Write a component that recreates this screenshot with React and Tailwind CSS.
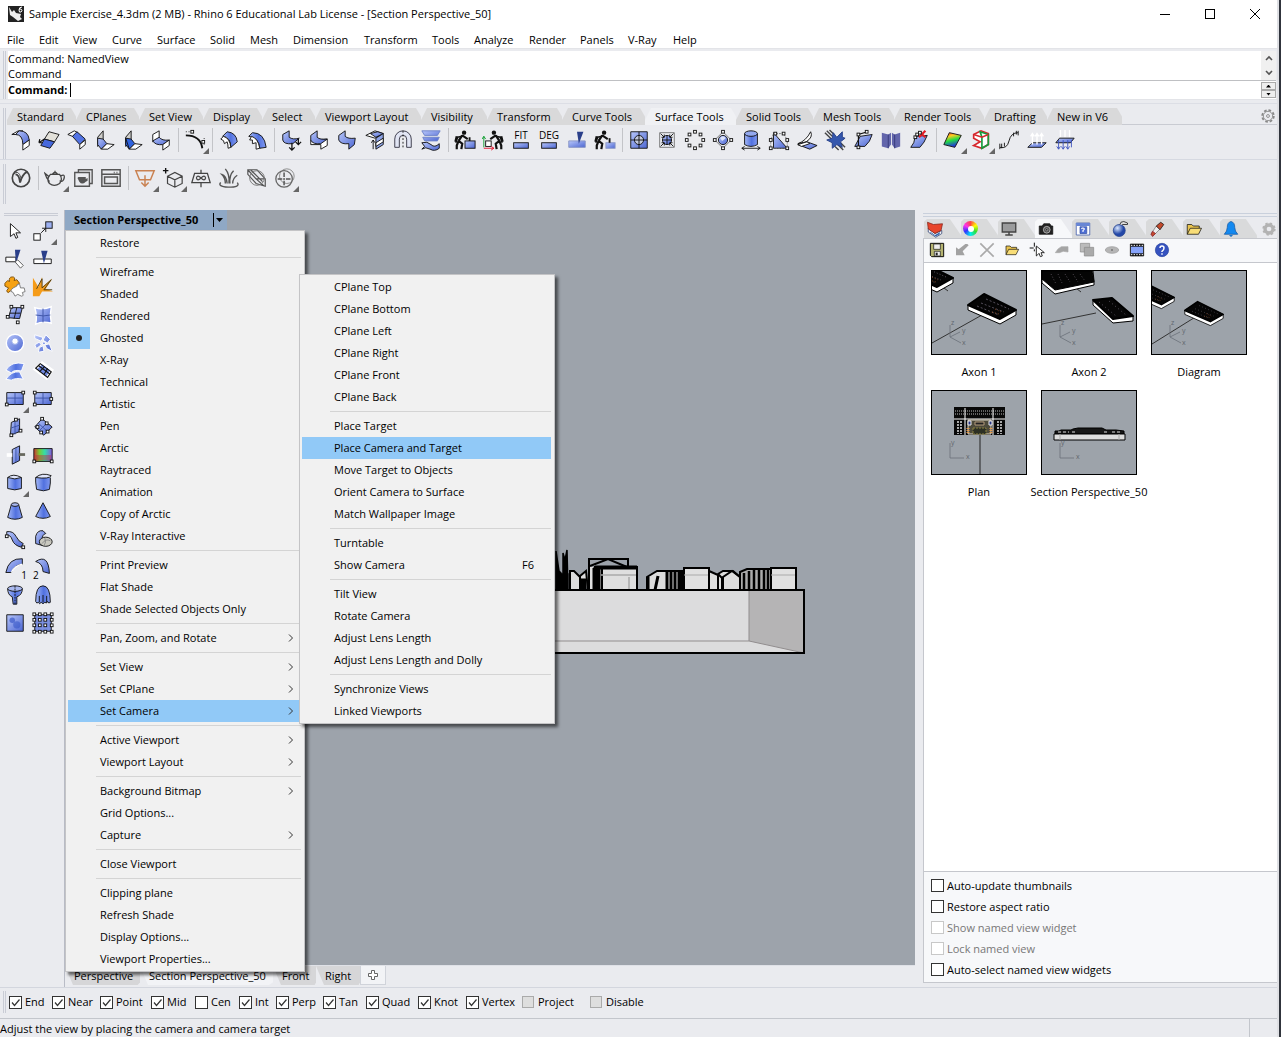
import React, { useState } from 'react';

const B = ({ d }) => <path d={d} fill="url(#blue)" />;
const W = ({ d }) => <path d={d} fill="#fff" />;
const L = ({ d, c, w, dash }) => <path d={d} stroke={c} strokeWidth={w} strokeDasharray={dash} />;
const F = ({ d, c }) => <path d={d} fill={c} stroke="none" />;
// small square control point handles
const P = ({ at }) => at.map(([x, y]) => <rect key={`${x}-${y}`} x={x - 1.5} y={y - 1.5} width="3" height="3" fill="#fff" />);

const walker = (
  <>
    <circle cx="11" cy="4" r="2.4" fill="#111" stroke="none" />
    <L d="M9 7L5 13M9 7l6 4M5 13l4 3-1 6M5 13l-2 5v4M3 8L1.500 14" w="2.4" />
    <L d="M9 8L4 9 2 15" w="1.6" />
  </>
);

const icons = {
  // surface tools
  extrudeFillet: <><W d="M2 6l7-4 5 0L8 6z" /><B d="M10 2q10 0 11 10l-7 5Q14 6 6 6z" /><W d="M14 17l7-5v6l-7 5z" /></>,
  extrudeFace: <><path d="M12 3l11 3-5 8-11-3z" fill="#e3e1da" /><path d="M7 11l11 3-5 7-10-3z" fill="#4668dd" /><L d="M7 11l-6 4M1 15l1-4M1 15h4" w="1.300" /></>,
  chamfer: <><W d="M2 6l7-4 4 2-6 4z" /><path d="M12 3l9 8-6 6-8-9z" fill="#5273e4" /><W d="M15 17l6-5v5l-6 5z" /></>,
  blendA: <><path d="M4 9l6-7v10l-6 7z" fill="#cdccc8" /><B d="M4 10l6 1 4 5-6 6-4-5z" /><W d="M8 22l6-6 8 1-7 5z" /></>,
  blendB: <><path d="M4 9l6-7v10l-6 7z" fill="#cdccc8" /><path d="M4 10l6 1 4 5-6 6-4-5z" fill="#2f62dd" /><W d="M8 22l6-6 8 1-7 5z" /><L d="M4 10l4 12" /></>,
  matchStep: <><W d="M3 6l7-4v8l-7 4z" /><B d="M3 13l7-4q3 4 11 3l-7 5q-8 1-11-4z" /><W d="M14 17l7-5v6l-7 5z" /></>,
  curveHandles: <><L d="M2 7q16 0 18 14" w="2" /><L d="M2 3h9M22 10v9" dash="1 2" /><P at={[[9, 3], [21, 14]]} /></>,
  offset: <><path d="M10 3q10 1 11 11l-7 6Q14 9 5 8z" fill="url(#deep)" /><W d="M6 8l-3 3q4 1 4 5l3-2q1 3 1 7l3-1Q13 10 6 8z" /></>,
  offsetVar: <><path d="M7 4q13 0 15 16l-7 1Q14 9 3 8z" fill="url(#deep)" /><W d="M6 8l-2 4h3v4l4-1v7l4-1Q13 10 6 8z" /></>,
  stepDown: <><B d="M3 6l7-4v7q4 3 11 1l-7 6q-10 1-11-4z" /><L d="M13 15v8M10 20l3 3 3-3M20 11v6M17 14l3 3 3-3" w="1.4" /></>,
  stepFill: <><W d="M3 12v5h11v5l7-4v-7z" /><B d="M3 7l7-5v7q3 3 11 2l-7 5q-9 1-11-4z" /></>,
  stepBlue: <><B d="M3 7l7-5v6q3 3 11 2l-1 7-6 5v-6q-9 1-11-4z" /></>,
  fillBox: <><W d="M2 7l10-5 9 3-9 5z" /><B d="M7 5l8-2 6 2-8 4z" /><path d="M13 10l8-5v12l-8 5z" fill="#8ea4e8" /><W d="M13 15l8-5v4l-8 5z" /><L d="M10 22V12M8 15l2-3 2 3" /></>,
  arch: <><path d="M3 20V11a9 9 0 0118 0v9h-5v-9a4 4 0 00-8 0v9z" fill="#e1e5f4" stroke="#334" /><L d="M12 2v20" dash="2 2" /></>,
  flatten: <><path d="M2 2h20l-3 5H5zM3 9h18l-2 4H5z" fill="url(#blue)" stroke="#6d83c8" /><B d="M2 15q6-2 10 2t9-1v5q-5 4-10 1t-9 0l3-3z" /></>,
  walkBox: <>{walker}<rect x="12" y="13" width="11" height="8" fill="url(#blue)" /><L d="M17 13V9" w="2" /></>,
  walkAxes: <><g transform="translate(24 0) scale(-1 1)">{walker}</g><rect x="4" y="13" width="6" height="6" fill="#fff" /><L d="M2 20V8M0 11l2-3 2 3" c="#0a9b2c" /><L d="M2 21h11M10 19l3 2-3 2" c="#e2132c" /></>,
  fit: <rect x="4" y="15" width="16" height="6" fill="url(#blue)" />,
  blade: <><path d="M3 13h18v7H3z" fill="url(#blue)" stroke="#8794c4" /><F d="M12 3h7l-5 13z" c="#2a3f8a" /></>,
  walkBoxPale: <>{walker}<rect x="13" y="15" width="10" height="6" fill="url(#blue)" stroke="#8794c4" /><L d="M17 15v-5" w="2" /></>,
  target: <><path d="M3 3h18v18H3z" fill="url(#blue)" /><circle cx="12" cy="12" r="5" fill="#c2c9dd" /><L d="M3 12h18M12 3v18" /></>,
  shrink: <><path d="M4 4h16v16H4z" stroke="#777" /><circle cx="12" cy="12" r="5" fill="url(#blue)" /><L d="M7 12h10M12 7v10" /><L d="M5 5l4 4M19 5l-4 4M5 19l4-4M19 19l-4-4M6 9h3V6M18 9h-3V6M6 15h3v3M18 15h-3v3" /></>,
  ring: <P at={[[12, 3], [18, 6], [21, 12], [18, 18], [12, 21], [6, 18], [3, 12], [6, 6]]} />,
  rebuild: <><path d="M12 3l9 9-9 9-9-9z" stroke="#777" /><circle cx="12" cy="12" r="5" fill="url(#blue)" /><F d="M9 10q3-4 6 0l-4 3z" c="#dde4fa" /><P at={[[12, 3], [21, 12], [12, 21], [3, 12]]} /></>,
  cylinder: <><path d="M5 5v12q7 4 14 0V5" fill="url(#deep)" /><ellipse cx="12" cy="5" rx="7" ry="3" fill="#93a8ee" /><L d="M2 21h20M5 19l-3 2 3 2M19 19l3 2-3 2" /></>,
  triangle: <><B d="M6 4v17h15z" /><L d="M6 5h11l4 7v9H3v-9z" dash="2 1" c="#777" /><P at={[[8, 5], [17, 5], [21, 12], [21, 21], [3, 21], [3, 12]]} /></>,
  unroll: <><W d="M2 16Q11 13 16 3q3 6-5 11z" /><B d="M2 17l10-3 11 4-8 4z" /><W d="M2 17l10-3 3 2-9 3z" /></>,
  smash: <><L d="M1 4l7 7M3 2l6 6M6 1l5 5M15 17l6 6M18 15l5 5M12 19l4 4" c="#444" w="1.5" /><path d="M3 12l6-2 1-6 4 5 6-6 0 6 3 1-5 4 2 6-6-3-5 4 0-6z" fill="#3557ad" stroke="#253e88" /></>,
  flow: <><B d="M9 8l13-2q-2 8-8 13H3z" /><L d="M7 20V6l10-3" w="1.300" /><P at={[[7, 6], [16, 3], [7, 20]]} /></>,
  fold: <><F d="M2 4l7 2v15l-7-2zM9 6l3-2v13l-3 4zM13 4l3 2v15l-3-4zM16 6l6-2v15l-6 2z" c="#6265ab" /><L d="M9 6v15M16 6v15" c="#36397a" /></>,
  deleteFace: <><B d="M8 8l13-1q-3 8-8 13H3q4-4 5-12z" /><L d="M12 3l7 6M19 2l-7 7" c="#e01b24" w="2.4" /><P at={[[8, 9], [10, 6], [13, 4]]} /></>,
  rainbow: <path d="M8 4l13 3-7 13-12-3z" fill="url(#rainbow)" />,
  colorBox: <><path d="M4 6l8-4 8 3v12l-7 4-9-3 7-4-7-4z" fill="#fff" stroke="#d7262c" strokeWidth="1.800" /><L d="M11 3l9 3v11l-7 4V9z" c="#159b3c" w="1.8" /><L d="M4 6l9 3 7-3" c="#d7262c" w="1.5" /></>,
  hairCurve: <><L d="M2 20q8 2 10-7t10-9" /><L d="M2 16v6M4 16v5M7 15v4M17 4v4M20 2v4M22 2v5" /></>,
  arrowsUp: <><B d="M7 15h15l-5 5H2z" /><L d="M7 17V5M12 17V5M17 17V5M5 8l2-3 2 3M10 8l2-3 2 3M15 8l2-3 2 3" c="#fff" w="1.5" /></>,
  arrowsBoth: <><L d="M7 9V1M12 9V1M17 9V1" c="#fff" w="1.500" /><B d="M6 10h16l-4 5H2z" /><L d="M5 12v10M10 12v10M15 12v10M19 12v8M3 19l2 3 2-3M8 19l2 3 2-3M13 19l2 3 2-3" c="#3f55c0" /></>,

  // v-ray
  vray: <><circle cx="12" cy="12" r="9.500" stroke="#444" strokeWidth="1.800" /><L d="M6 8q4 0 5 9 2-9 8-12" c="#444" w="2" /><L d="M4 8q5-6 8 4" c="#444" /></>,
  teapot: <path d="M7 8q-5 5-1 10 5 4 11 0 4-5 0-10zM6 11L1 7l2 5 3 4M18 10q5-3 4 2t-5 3M9 8q3-4 6 0M12 6V4" stroke="#444" strokeWidth="1.400" />,
  frames: <><path d="M7 6V3h15v15h-3M3 6h16v15H3z" stroke="#555" strokeWidth="1.500" /><F d="M7 11h8v2l2-1v3l-2 1q-4 4-7 0l-2-4z" c="#555" /></>,
  frameWindow: <path d="M2 3h20v18H2zM2 8h20M5 11h14v7H5zM15 6h1M18 6h1" stroke="#555" strokeWidth="1.600" />,
  lightPlane: <path d="M2 4h20l-4 10H6zM12 9v12M8 17l4 4 4-4" stroke="#c98252" strokeWidth="1.600" />,
  cubePlus: <><path d="M6 10l8-4 8 4v8l-8 4-8-4zM6 10l8 4 8-4M14 14v8" stroke="#444" strokeWidth="1.300" /><L d="M4 1v6M1 4h6" w="1.500" /></>,
  infinitePlane: <><path d="M5 7h14l3 10H2zM12 3v4M12 17v5" stroke="#444" strokeWidth="1.400" /><path d="M12 12q-4-4-5 0 1 4 5 0t5 0q-1 4-5 0" stroke="#444" strokeWidth="1.200" /></>,
  grass: <path d="M10 18Q9 9 4 8q4 4 4 10M12 18Q13 8 8 2M13 18q-1-9 4-14M16 18q0-6 5-9M3 17q-4 4 8 5 14 0 10-5" stroke="#555" strokeWidth="1.500" />,
  clipper: <><path d="M2 3h10l9 10v8L11 18 2 8zM2 3l9 10h9M11 13l9 8M5 3l13 13" stroke="#555" strokeWidth="1.300" /><circle cx="12" cy="12" r="8" stroke="#777" /></>,
  proxy: <><circle cx="14" cy="10" r="8" stroke="#888" /><circle cx="11" cy="13" r="9" stroke="#666" strokeWidth="1.400" /><L d="M11 6v5M11 15v5M4 13h5M13 13h5M10 13h2" c="#555" w="1.600" /></>,

  // left palette
  pointer: <W d="M7 4v14l4-3 2 5 2-1-2-5h5z" />,
  link: <><rect x="2" y="15" width="7" height="7" fill="#fff" /><rect x="15" y="2" width="7" height="7" fill="#9db1f2" /><L d="M10 14l5-5M11 9h4v4" /></>,
  trim: <><W d="M2 10h11v5H2z" /><F d="M12 2h6l-5 15z" c="#2a3f8a" /><path d="M12 15l3-2 6 6-3 3z" fill="#fff" stroke="#555" /></>,
  split: <><W d="M2 12h19v5H2z" /><F d="M10 3h7l-4 14z" c="#2a3f8a" /></>,
  join: <><path d="M1 8l3-3 2 1q-1-5 3-5t2 4l3-1 3 4-3 2q4 2 1 5l-4-1 0 3-4-1q-3 4-4 0l2-3-4-2z" fill="#f6a213" stroke="#7a4d08" /><path d="M10 13l4-2q0-3 3-2l1 4 4 0 1 4-3 1q2 4-1 4l-4-2-3 2-2-4q-4-1-2-3z" fill="#fff" stroke="#777" /></>,
  explode: <><path d="M1 2l6 10 4-11v11l11-9-7 11 8 3H11l-3 5H1z" fill="#f59c1a" stroke="none" /><L d="M5 14l6-11v10l10-9-8 11h9" c="#4b3b10" /></>,
  quadPatch: <><B d="M8 4h12l-3 12-12-1z" /><L d="M14 4l-3 12M6 10h12" /><P at={[[8, 3], [20, 3], [4, 14], [15, 20]]} /></>,
  patch: <><path d="M3 4q9 3 18-1-2 9 0 18-9-3-17 1 2-9-1-18z" fill="url(#blue)" stroke="#fff" strokeWidth="1.500" /><path d="M12 5v15M4 12q9 2 16 0" stroke="#3b52a5" /></>,
  torus: <><circle cx="12" cy="12" r="9.500" fill="url(#blue)" stroke="#fff" strokeWidth="1.500" /><circle cx="12" cy="10" r="3.500" fill="#fff" stroke="#8ea2e6" /></>,
  fan: <path d="M3 3l9 3-2 4-7-3zM15 3l5 5-3 4-5-3zM19 13l3 8-6-3-2-4zM3 14l5-3 2 3-5 4zM8 17l4-2 1 6-6 1zM11 11l3 0 1 2-3 1z" fill="url(#blue)" stroke="#fff" />,
  twoRails: <><path d="M2 11Q8 1 22 4l-3 8q-8-2-11 2z" fill="url(#deep)" stroke="#fff" /><path d="M2 21q6-9 15-8l4 8q-8-2-13 1z" fill="url(#deep)" stroke="#fff" /></>,
  netPatch: <><path d="M3 10l8-7 11 8-6 9z" fill="#6f88e0" stroke="#fff" strokeWidth="3" /><L d="M4 9l5-5 12 9-4 6zM8 13l6-6M13 16l4-7M7 6l12 9" w="1.2" /></>,
  plane: <><path d="M3 5h18v13H3z" fill="url(#blue)" /><L d="M3 11h18M12 5v13" c="#3b52a5" /><P at={[[3, 18], [21, 5]]} /></>,
  plane3: <><path d="M3 5h18v13H3z" fill="url(#blue)" /><L d="M3 11h18M12 5v13" c="#3b52a5" /><P at={[[3, 5], [3, 18], [21, 12]]} /></>,
  vertPlane: <><B d="M8 7l9-4v14l-10 4z" /><L d="M8 13l9-3M12 5v15" c="#3b52a5" /><P at={[[8, 21], [18, 16], [13, 4]]} /></>,
  cornerPlane: <><B d="M11 3l11 9-9 9-10-9z" /><L d="M7 8l10 9M17 7l-9 9" c="#3b52a5" /><P at={[[11, 3], [16, 8], [6, 12], [10, 18], [17, 17]]} /></>,
  cutPlane: <><B d="M9 6l8-4v16l-8 4z" /><L d="M13 4v16" c="#3b52a5" /><F d="M3 10h6v4H3z" c="#fff" /><F d="M16 10h7v3h-7z" c="#66675d" /></>,
  picture: <><path d="M2 5h20v14H2z" fill="url(#spectrum)" /><F d="M3 12h18v6H3z" c="#c0304177" /><P at={[[2.5, 19], [21.5, 19]]} /></>,
  extrude: <><path d="M4 6v12q8 3 15 0V6" fill="url(#deep)" /><path d="M4 6q6-5 15 0-7 3-15 0z" fill="#dfe5fb" /></>,
  extrudeAlong: <><path d="M4 6v5l1 8q8 3 14 0l1-7V6" fill="url(#deep)" /><path d="M4 6q7-6 17-2-2 4-17 2z" fill="#dfe5fb" /></>,
  taper: <><path d="M8 5L4 19q8 4 16 0L16 5" fill="url(#deep)" /><ellipse cx="12" cy="5" rx="4" ry="2" fill="#a9b8ee" /></>,
  cone: <path d="M12 3L4 18q8 4 16 0z" fill="url(#deep)" />,
  ribbon: <><B d="M3 4q7-1 10 5t8 8l-2 4Q11 19 9 13T3 8z" /><P at={[[3, 9], [21, 21]]} /></>,
  boss: <><B d="M4 17V9q2-7 8-6l3 3q-4 1-4 7v6z" /><ellipse cx="15" cy="15" rx="7" ry="5" fill="#c9c8bf" /><L d="M11 17q4-6 9-3M14 11q2 4-1 9" c="#888" /></>,
  sweep1: <><path d="M2 18Q5 2 20 3v6q-8 0-12 9z" fill="url(#blue)" /><L d="M8 18q4-8 12-9" c="#fff" w="1.5" /></>,
  sweep2: <path d="M4 6q14-9 15 13l-7-2q0-9-8-11z" fill="url(#blue)" />,
  revolve: <><path d="M4 5q0 7 5 9l1 8h4l0-8q6-2 6-9" fill="url(#deep)" /><ellipse cx="12" cy="5" rx="8" ry="3" fill="#a9b8ee" /><L d="M12 2v20" dash="2 1" /></>,
  drape: <><path d="M4 19Q4 2 12 2t8 18q-2 2-3-1-1 3-3 1-2 3-4 0-2 3-3 0-2 2-3-1z" fill="url(#deep)" /><L d="M8 13v7M12 12v8M16 13v7" /></>,
  heightfield: <><path d="M3 3h18v18H3z" fill="url(#blue)" /><circle cx="9" cy="9" r="3" fill="#2e4fc3" stroke="none" opacity=".6" /><circle cx="14" cy="14" r="4" fill="#2e4fc3" stroke="none" opacity=".5" /></>,
  pointGrid: <><path d="M3 3h18v18H3z" fill="#7b8fe0" /><P at={[2.5, 8.5, 14.5, 21.5].flatMap((x) => [2.5, 8.5, 14.5, 21.5].map((y) => [x, y]))} /></>,

  // panel tabs
  layers: <><path d="M3 11l9 7 9-4v4l-8 5-10-7z" fill="#fff" stroke="#25396e" /><path d="M2 3l8 3 12-1-2 9-8 4-9-6z" fill="#e8452c" stroke="#83231a" /><F d="M5 15l7 5 7-4-1 3-5 3-7-5z" c="#3565ad" /></>,
  screen: <><path d="M3 4h18v12H3z" fill="#9a9b9c" stroke="#444" strokeWidth="1.800" /><L d="M7 20h10M12 16v4" w="2" c="#444" /></>,
  camera: <><path d="M3 8h4l2-3h8l2 3h2v11H3z" fill="#222" /><circle cx="13" cy="13" r="4.500" fill="#555" stroke="#ccc" /><circle cx="13" cy="13" r="1.500" fill="#111" stroke="#aaa" /></>,
  helpWindow: <><path d="M3 4h18v16H3z" fill="#fff" stroke="#3553a7" /><F d="M3 4h18v4H3z" c="#6886d5" /><path d="M8 9h9v9H8z" fill="#4e6ed4" stroke="#3553a7" /><L d="M10 12q1-2 3-1t-1 3v2" c="#fff" w="1.500" /></>,
  globe: <><circle cx="11" cy="14" r="8" fill="url(#sphere)" stroke="#23408c" /><path d="M12 6q0-4 5-4l5 2v2h-7" fill="#ddd" /></>,
  brush: <><path d="M4 19l7-11 5 4-9 9z" fill="#eee" stroke="#777" /><path d="M11 8l6-5 4 3-5 7z" fill="#c34a2c" /><path d="M4 19l2-4 4 3-4 4z" fill="#c34a2c" stroke="#823" /></>,
  folder: <><path d="M3 19V6h6l2 2h8v3" fill="#e9c44e" /><path d="M3 19l4-8h15l-4 8z" fill="#f8dd77" /></>,
  bell: <><path d="M3 19q4-4 4-9 0-7 5-8 5 1 5 8 0 5 4 9z" fill="#1389f0" stroke="#1859a0" /><path d="M10 20q2 4 4 0" fill="#1389f0" stroke="#1859a0" /></>,
  gear: <><circle cx="12" cy="12" r="6" stroke="#b3b3b3" strokeWidth="5" /><circle cx="12" cy="12" r="8.500" stroke="#b3b3b3" strokeWidth="3" strokeDasharray="3.400 3.300" /></>,
  gearOutline: <><circle cx="12" cy="12" r="10" stroke="#888" strokeWidth="3" strokeDasharray="4.500 3.300" /><circle cx="12" cy="12" r="8" stroke="#888" strokeWidth="1.500" /><circle cx="12" cy="12" r="2.500" stroke="#888" strokeWidth="1.500" /></>,

  // panel toolbar
  save: <><path d="M2 2h20v20H4l-2-2z" fill="#b5b471" strokeWidth="1.500" /><path d="M7 3h10v8H7zM8 14h9v7H8z" fill="#eee" /><F d="M10 16h3v4h-3z" c="#222" /></>,
  restore: <F d="M20 3l2 2-9 9 3 6H3V8l4 3 10-8z" c="#a2a2a2" />,
  remove: <L d="M2 2l20 20M22 2L2 22" c="#aaa" w="2.500" />,
  pick: <><L d="M1 9h6M10 9h3M8 1v6M8 11v3" w="1.500" /><path d="M11 6v15l4-4 2 5 3-1-2-5h5z" fill="#fff" strokeWidth="1.300" /></>,
  shark: <path d="M2 16q4-7 9-9h10v8l-7-1-6 2z" fill="#a5a5a5" stroke="#aaa" />,
  copies: <><path d="M2 2h14v13H2z" fill="#bbb" stroke="#888" /><path d="M8 8h14v13H8z" fill="#aaa" stroke="#888" /></>,
  eye: <><ellipse cx="12" cy="12" rx="10" ry="5" fill="#b5b5b5" stroke="#999" /><circle cx="12" cy="12" r="1.500" fill="#777" stroke="none" /></>,
  film: <><path d="M2 3h20v18H2z" fill="#111" /><F d="M3 7h18v10H3z" c="#86a3fa" /><L d="M3 5h18M3 19h18" c="#fff" dash="2 2" w="1.500" /></>,
  help: <><circle cx="12" cy="12" r="10" fill="#3552bf" stroke="#29449d" /><L d="M9 9q0-3 3-3t3 3-3 5v1M12 17v2" c="#fff" w="2.200" /></>,
};

function Icon({ name, size = 'size-6' }) {
  return (
    <svg viewBox="0 0 24 24" className={`${size} shrink-0`} fill="none" stroke="#111" aria-hidden="true">
      {icons[name]}
    </svg>
  );
}

const menus = [
  ['File', 'w-8'], ['Edit', 'w-[34px]'], ['View', 'w-[39px]'], ['Curve', 'w-[45px]'], ['Surface', 'w-[53px]'],
  ['Solid', 'w-10'], ['Mesh', 'w-[43px]'], ['Dimension', 'w-[71px]'], ['Transform', 'w-[68px]'], ['Tools', 'w-[42px]'],
  ['Analyze', 'w-[55px]'], ['Render', 'w-[51px]'], ['Panels', 'w-12'], ['V-Ray', 'w-[45px]'], ['Help', 'w-10'],
];

const toolTabs = [
  ['Standard', 'w-[69px]'], ['CPlanes', 'w-[63px]'], ['Set View', 'w-16'], ['Display', 'w-[59px]'], ['Select', 'w-[53px]'],
  ['Viewport Layout', 'w-[106px]'], ['Visibility', 'w-[66px]'], ['Transform', 'w-[75px]'], ['Curve Tools', 'w-[83px]'],
  ['Surface Tools', 'w-[91px]'], ['Solid Tools', 'w-[77px]'], ['Mesh Tools', 'w-[81px]'], ['Render Tools', 'w-[90px]'],
  ['Drafting', 'w-[63px]'], ['New in V6', 'w-[75px]'],
];

const surfaceTools = [
  'extrudeFillet', 'extrudeFace', 'chamfer', 'blendA', 'blendB', 'matchStep', '|',
  'curveHandles+', '|', 'offset', 'offsetVar', '|',
  'stepDown', 'stepFill', 'stepBlue', 'fillBox', 'arch', 'flatten', '|',
  'walkBox', 'walkAxes', 'FIT', 'DEG', 'blade', 'walkBoxPale', '|',
  'target', 'shrink', 'ring', 'rebuild', 'cylinder', 'triangle', 'unroll', 'smash', 'flow', 'fold', 'deleteFace', '|',
  'rainbow+', 'colorBox+', 'hairCurve', 'arrowsUp', 'arrowsBoth',
];

const vrayTools = [
  'vray', '|', 'teapot+', 'frames', 'frameWindow', '|',
  'lightPlane+', 'cubePlus+', 'infinitePlane', 'grass', 'clipper', 'proxy+',
];

const palette = [
  'pointer', 'link+', 'trim', 'split', 'join', 'explode', 'quadPatch', 'patch', 'torus', 'fan',
  'twoRails', 'netPatch', 'plane+', 'plane3', 'vertPlane', 'cornerPlane', 'cutPlane', 'picture',
  'extrude+', 'extrudeAlong', 'taper', 'cone', 'ribbon', 'boss', 'sweep1', 'sweep2',
  'revolve', 'drape', 'heightfield', 'pointGrid',
];

const viewMenu = [
  'Restore', '-', 'Wireframe', 'Shaded', 'Rendered', 'Ghosted', 'X-Ray', 'Technical', 'Artistic', 'Pen', 'Arctic',
  'Raytraced', 'Animation', 'Copy of Arctic', 'V-Ray Interactive', '-', 'Print Preview', 'Flat Shade',
  'Shade Selected Objects Only', '-', 'Pan, Zoom, and Rotate>', '-', 'Set View>', 'Set CPlane>', 'Set Camera>', '-',
  'Active Viewport>', 'Viewport Layout>', '-', 'Background Bitmap>', 'Grid Options...', 'Capture>', '-',
  'Close Viewport', '-', 'Clipping plane', 'Refresh Shade', 'Display Options...', 'Viewport Properties...',
];

const cameraMenu = [
  'CPlane Top', 'CPlane Bottom', 'CPlane Left', 'CPlane Right', 'CPlane Front', 'CPlane Back', '-',
  'Place Target', 'Place Camera and Target', 'Move Target to Objects', 'Orient Camera to Surface',
  'Match Wallpaper Image', '-', 'Turntable', 'Show Camera', '-', 'Tilt View', 'Rotate Camera',
  'Adjust Lens Length', 'Adjust Lens Length and Dolly', '-', 'Synchronize Views', 'Linked Viewports',
];

const snaps = [
  ['End', true, 'w-[43px]'], ['Near', true, 'w-12'], ['Point', true, 'w-[51px]'], ['Mid', true, 'w-11'], ['Cen', false, 'w-11'],
  ['Int', true, 'w-[37px]'], ['Perp', true, 'w-[47px]'], ['Tan', true, 'w-[43px]'], ['Quad', true, 'w-[52px]'],
  ['Knot', true, 'w-12'], ['Vertex', true, 'w-14'],
];

function ToolButton({ name }) {
  const flyout = name.endsWith('+');
  const id = flyout ? name.slice(0, -1) : name;
  const word = id === 'FIT' || id === 'DEG';
  const digit = { sweep1: '1', sweep2: '2' }[id];
  return (
    <button type="button" aria-label={id} className="relative flex size-7 shrink-0 items-center justify-center hover:bg-white/60">
      <Icon name={word ? 'fit' : id} size="size-[22px]" />
      {word && <span className="absolute top-[3px] text-[10px] leading-3">{id}</span>}
      {digit && <span className={`absolute bottom-0 text-[10px] leading-3 ${id === 'sweep1' ? 'right-0.5' : 'left-1'}`}>{digit}</span>}
      {flyout && <span className="absolute right-0 bottom-0 size-1.5 bg-[#666] [clip-path:polygon(100%_0,100%_100%,0_100%)]" />}
    </button>
  );
}

function Toolbar({ tools }) {
  return (
    <div className="flex items-center">
      {tools.map((t, i) =>
        t === '|' ? (
          <span key={i} className="flex h-6 w-1.5 justify-center"><i className="w-px bg-[#c3c4c8]" /></span>
        ) : (
          <ToolButton key={i} name={t} />
        )
      )}
    </div>
  );
}

function Menu({ label, items, active, checked, shortcuts = {}, className }) {
  return (
    <div role="menu" aria-label={label} className={`absolute z-20 border border-[#c4c4c6] bg-[#f1f1f1] py-px pr-[3px] pl-0.5 shadow-[3px_3px_3px_rgba(0,0,0,0.55)] ${className}`}>
      {items.map((item, i) => {
        if (item === '-') return <div key={i} role="separator" className="ml-7 flex h-[7px] items-center"><i className="h-px w-full bg-[#d4d4d4]" /></div>;
        const sub = item.endsWith('>');
        const text = sub ? item.slice(0, -1) : item;
        return (
          <button
            key={i}
            type="button"
            role="menuitem"
            className={`relative flex h-[22px] w-full items-center justify-between pl-8 text-left hover:bg-[#91c9f7] ${text === active ? 'bg-[#91c9f7]' : ''}`}
          >
            {text === checked && (
              <span className="absolute left-0 flex size-[22px] items-center justify-center bg-[#91c9f7]">
                <i className="size-1.5 rounded-full bg-[#222]" />
              </span>
            )}
            <span>{text}</span>
            {shortcuts[text] && <span className="mr-[17px]">{shortcuts[text]}</span>}
            {sub && (
              <svg viewBox="0 0 8 10" className="mr-1.5 h-2.5 w-2" fill="none" stroke="#333"><path d="M2 1.500L5.500 5 2 8.500" /></svg>
            )}
          </button>
        );
      })}
    </div>
  );
}

function Check({ label, on = false, disabled = false, grey = false, className = '' }) {
  const [value, setValue] = useState(on);
  return (
    <label className={`flex shrink-0 items-center gap-[3px] whitespace-nowrap ${disabled ? 'text-[#777]' : ''} ${className}`}>
      <span className="relative flex size-[13px] shrink-0">
        <input
          type="checkbox"
          checked={value}
          disabled={disabled}
          onChange={(e) => setValue(e.target.checked)}
          className={`m-0 appearance-none border ${grey ? 'size-3 border-[#aaa] bg-[#dedede]' : disabled ? 'size-[13px] border-[#c8c8c8] bg-white' : 'size-[13px] border-[#333] bg-white'}`}
        />
        {value && (
          <svg viewBox="0 0 13 13" className="pointer-events-none absolute inset-0" fill="none" stroke="#333" strokeWidth="1.200"><path d="M3 6.500l2.500 3L10.500 3.500" /></svg>
        )}
      </span>
      {label}
    </label>
  );
}

// slanted keyboard block used by the axonometric previews
function Slab({ transform, seed }) {
  return (
    <g transform={transform}>
      <path d="M-24-2L-8-12 24 3v5L8 17-24 3z" fill="#fff" stroke="#000" />
      <path d="M-24-2L-8-13 24 3 8 12z" fill="#050505" stroke="#000" strokeWidth="2" strokeLinejoin="round" />
      <path d="M-15-1L7 8M-11-4l23 9M-6-8L17 2" stroke="#8b8296" strokeWidth=".6" strokeDasharray={seed} />
      <path d="M3 2l6 3M0 5l7 2" stroke="#b6632e" strokeWidth=".7" strokeDasharray="1 2" />
    </g>
  );
}

function Axes({ flat }) {
  return (
    <g stroke="#6a7078" fill="none" strokeWidth=".8">
      <path d={flat ? 'M18 52v15h14' : 'M18 54v12l11 6M18 66l10-5'} />
      <g fill="#626870" stroke="none" fontSize="7">
        <text x="19" y="54">{flat ? 'y' : 'z'}</text>
        {!flat && <text x="30" y="62">y</text>}
        <text x={flat ? 34 : 30} y={flat ? 68 : 74}>x</text>
      </g>
    </g>
  );
}

const previews = {
  'Axon 1': (
    <>
      <path d="M0 72L50 44M8 14l8 6" stroke="#333" />
      <Slab transform="translate(-3 4)" seed="1 2" />
      <Slab transform="translate(60 36)" seed="2 2" />
      <Axes />
    </>
  ),
  'Axon 2': (
    <>
      <path d="M0 53L54 42M30 14l9 7" stroke="#333" />
      <path d="M0 0h51l1 10v4l-39 9L0 12z" fill="#fff" stroke="#000" />
      <path d="M0 0h50l2 11-39 8L0 8z" fill="#050505" stroke="#000" />
      <path d="M9 3l5 10M16 3l4 9M23 3l5 8M31 3l5 8M38 3l5 7" stroke="#837986" strokeDasharray="1 2" strokeWidth=".6" />
      <path d="M51 30l19-3 21 18v5l-20 2-20-18z" fill="#fff" stroke="#000" />
      <path d="M51 29l19-2 21 18-20 3z" fill="#060606" stroke="#000" strokeWidth="2" strokeLinejoin="round" />
      <path d="M57 31l17 14M67 30l17 14" stroke="#8b8296" strokeWidth=".6" strokeDasharray="1 3" />
      <Axes />
    </>
  ),
  Diagram: (
    <>
      <path d="M0 73L45 45" stroke="#333" />
      <Slab transform="translate(3 24) scale(.8)" seed="1 3" />
      <Slab transform="translate(52 41) scale(.8)" seed="1 3" />
      <Axes />
    </>
  ),
  Plan: (
    <>
      <path d="M48 43v41" stroke="#222" />
      <path d="M22 16h51v28H22z" fill="#080808" />
      <path d="M23 20h49M23 23h49" stroke="#bbb" strokeDasharray="1 1" />
      <path d="M33 17v27M61 17v27M22 28h51" stroke="#fff" />
      <path d="M26 30v13M29 30v13M66 30v13M69 30v13" stroke="#ddd" strokeWidth="1.500" strokeDasharray="2 1" />
      <path d="M36 29h23v14H36z" fill="#4d4a3b" stroke="#e5dccb" />
      <path d="M43 31h9v3h-9z" fill="#222" stroke="#b59b7d" />
      <path d="M36 30h3v4h-3zM57 30h3v4h-3z" fill="#263381" stroke="#eee" />
      <path d="M36 37v6M59 37v6" stroke="#e29b50" strokeWidth="3" strokeDasharray="1 1" />
      <path d="M41 37h13v6H41z" fill="#2c2f23" stroke="#8a813f" strokeDasharray="2 1" />
      <Axes flat />
    </>
  ),
  'Section Perspective_50': (
    <>
      <path d="M13 43v-3h4l2-1h10l2-1 5-1h24l4 2 10 0 8 1v3z" fill="#171717" stroke="#000" />
      <path d="M16 41h11M30 41h5M62 41h5M70 41h9" stroke="#ddd" strokeDasharray="3 2" />
      <path d="M12 43h71v6H12z" fill="#ddd" stroke="#000" />
      <path d="M18 43v6M77 43v6" stroke="#aaa" />
      <Axes flat />
    </>
  ),
};

function Preview({ name }) {
  return (
    <figure className="flex w-[110px] flex-col items-center">
      <svg viewBox="0 0 94 83" className="h-[85px] w-24 border border-black bg-[#9da3aa]" fill="none" role="img" aria-label={name}>{previews[name]}</svg>
      <figcaption className="mt-2 h-[27px] leading-[18px] whitespace-nowrap">{name}</figcaption>
    </figure>
  );
}

// right half of the ghosted model; the rest sits under the menus
function Model() {
  return (
    <svg viewBox="0 0 260 110" className="absolute top-[336px] left-[482px] h-[110px] w-[260px]" fill="none" stroke="#000" aria-hidden="true">
      <path d="M0 44h257v63H0z" fill="#dcdcdd" stroke="none" />
      <path d="M202 44h55v63l-55-12z" fill="#b5b4b5" stroke="none" />
      <path d="M202 44v51H0M202 95l55 12" stroke="#918d8e" />
      <path d="M9 44V5l3 20 2 2V44M16 44V7l2 7 2-10 1 40M14 44V28h7v16" fill="#000" strokeWidth="1.500" />
      <path d="M23 44V25h4l6 6v13M33 30l6-5 2 19" fill="#dcdcdd" strokeWidth="2" />
      <path d="M33 44V33h6v11z" fill="#000" />
      <path d="M42 44V13h39v8h9v23z" fill="#dfdfdf" strokeWidth="2" />
      <path d="M43 13h37v8H43z" fill="#9da3ab" stroke="none" />
      <path d="M42 21V13h39v8M43 20l18-7 19 8M48 44V21h7v23M55 21h35v23" strokeWidth="2" />
      <path d="M46 22h7v22h-7zM48 20h42v3H48z" fill="#000" />
      <path d="M54 29h35M82 31v13" stroke="#aaa" strokeWidth="1.500" />
      <path d="M100 44V31l10-6h26v19z" fill="#ddd" strokeWidth="2" />
      <path d="M101 31v13M111 30l-3 14M120 26v18M124 25v19M128 24v20M132 24v20M135 24v20" strokeWidth="3" />
      <path d="M137 44V22h25v22z" fill="#e0e0e0" strokeWidth="2" />
      <path d="M137 29h24" stroke="#aaa" />
      <path d="M162 25l9 4v15h-9zM171 28l5-3 10 0 7 6v13h-22z" fill="#ddd" strokeWidth="2" />
      <path d="M171 28l4 4v12M176 44V31l9-6 8 6v13" strokeWidth="2" />
      <path d="M193 44V26l7-3h24v21z" fill="#aaa" strokeWidth="2" />
      <path d="M197 27v17M202 25v19M207 24v20M212 24v20M217 24v20M221 24v20" strokeWidth="2.500" />
      <path d="M224 44V22h25v22z" fill="#e0e0e0" strokeWidth="2" />
      <path d="M224 29h24" stroke="#aaa" />
      <path d="M0 44h257v63H0" strokeWidth="2" />
    </svg>
  );
}

const panelTabs = ['layers', 'wheel', 'screen', 'camera', 'helpWindow', 'globe', 'brush', 'folder', 'bell'];
const panelTools = ['save', 'restore', 'remove', 'folder', 'pick', 'shark', 'copies', 'eye', 'film', 'help'];

function NamedViews() {
  return (
    <aside className="flex w-[354px] shrink-0 flex-col">
      <div className="mt-[3px] h-1 border-y border-[#c9d0dc]" />
      <div className="flex h-[21px] items-end pl-px">
        {panelTabs.map((t) => (
          <button
            key={t}
            type="button"
            aria-label={t}
            className={`flex h-[19px] w-[37px] shrink-0 items-center pl-0.5 [clip-path:polygon(0_15%,8%_0,70%_0,100%_85%,100%_100%,0_100%)] ${t === 'camera' ? 'bg-[#f7f8fa]' : 'bg-[#d9dadb]'}`}
          >
            {t === 'wheel' ? (
              <span className="flex size-[15px] items-center justify-center rounded-full bg-[conic-gradient(#f44,#ff0,#3d3,#0ee,#33f,#f3e,#f44)]"><i className="size-1.5 rounded-full bg-white" /></span>
            ) : (
              <Icon name={t} size="size-[18px]" />
            )}
          </button>
        ))}
        <button type="button" aria-label="Panel options" className="ml-1 flex size-[18px] items-center justify-center overflow-hidden">
          <Icon name="gear" size="size-4" />
        </button>
      </div>
      <div className="flex flex-1 flex-col border border-r-0 border-[#c5c7cd] bg-white">
        <div className="flex h-6 items-center border-b border-[#c5c7cd] bg-[#f7f8fa] pb-px">
          {panelTools.map((t) => (
            <button key={t} type="button" aria-label={t} className="flex w-[25px] items-center justify-center">
              <Icon name={t} size="size-4" />
            </button>
          ))}
        </div>
        <div className="flex flex-1 flex-wrap content-start pt-[7px]">
          {Object.keys(previews).map((p) => <Preview key={p} name={p} />)}
        </div>
        <div className="flex h-[111px] flex-col border-t border-[#c5c7cd] bg-[#f7f8fa] pt-[3px] pl-[7px]">
          <Check label="Auto-update thumbnails" className="h-[21px]" />
          <Check label="Restore aspect ratio" className="h-[21px]" />
          <Check label="Show named view widget" disabled className="h-[21px]" />
          <Check label="Lock named view" disabled className="h-[21px]" />
          <Check label="Auto-select named view widgets" className="h-[21px]" />
        </div>
      </div>
      <div className="h-1" />
    </aside>
  );
}

function Grip() {
  return <i className="ml-[3px] w-[3px] shrink-0 self-stretch border-x border-[#c9ccd5]" />;
}

function App() {
  const [command, setCommand] = useState('');

  return (
    <div className="flex min-h-screen overflow-hidden bg-[#eaebef] font-['Open_Sans','Noto_Sans',sans-serif] text-[11px] leading-4 text-black">
      <svg width="0" height="0" className="absolute" aria-hidden="true">
        <defs>
          <linearGradient id="blue" x1="0" y1="0" x2="1" y2="1"><stop stopColor="#b7c6fa" /><stop offset="1" stopColor="#4c66d2" /></linearGradient>
          <linearGradient id="deep"><stop stopColor="#a4b8f7" /><stop offset=".55" stopColor="#5171df" /><stop offset="1" stopColor="#829af0" /></linearGradient>
          <linearGradient id="rainbow" x1="0" y1="0" x2=".3" y2="1"><stop stopColor="#e22" /><stop offset=".3" stopColor="#fc2" /><stop offset=".6" stopColor="#2d4" /><stop offset="1" stopColor="#23d" /></linearGradient>
          <linearGradient id="spectrum"><stop stopColor="#c33" /><stop offset=".3" stopColor="#7c3" /><stop offset=".6" stopColor="#3da" /><stop offset="1" stopColor="#85d" /></linearGradient>
          <radialGradient id="sphere" cx=".35" cy=".3"><stop stopColor="#dbe9ff" /><stop offset="1" stopColor="#2448a8" /></radialGradient>
        </defs>
      </svg>

      <div className="flex min-w-0 flex-1 flex-col">
        <header className="bg-white">
          <div className="flex h-7 items-center pl-2">
            <svg viewBox="0 0 16 16" className="size-4" aria-hidden="true">
              <path d="M0 0h16v16H0z" fill="#222" />
              <path d="M1 1l3 5 2-2 2 3 5 1-1 3 2 2-4 2-5-4-3-2z" fill="#eee" />
              <path d="M14 1q-3 0-3 3t2 2 0-3h-2" fill="none" stroke="#fff" />
            </svg>
            <h1 className="ml-[5px] flex-1 text-[11px]">Sample Exercise_4.3dm (2 MB) - Rhino 6 Educational Lab License - [Section Perspective_50]</h1>
            <button type="button" aria-label="Minimize" className="flex w-[45px] justify-center"><i className="h-px w-2.5 bg-black" /></button>
            <button type="button" aria-label="Maximize" className="flex w-[45px] justify-center"><i className="size-2.5 border border-black" /></button>
            <button type="button" aria-label="Close" className="flex w-[45px] justify-center">
              <svg viewBox="0 0 10 10" className="size-2.5" stroke="#000"><path d="M0 0l10 10M10 0L0 10" /></svg>
            </button>
          </div>
          <nav className="flex h-5 items-center pt-1 pl-[7px]">
            {menus.map(([name, w]) => (
              <button key={name} type="button" className={`${w} shrink-0 text-left whitespace-nowrap`}>{name}</button>
            ))}
          </nav>
        </header>

        <section aria-label="Command history" className="flex border-y border-[#e3e4e8] pt-0.5">
          <Grip />
          <div className="ml-0.5 flex-1 bg-white">
            <div className="flex h-[30px] justify-between border-b border-[#bfc0c3]">
              <div className="leading-[15px]"><p>Command: NamedView</p><p>Command</p></div>
              <div className="flex w-[15px] flex-col items-center justify-around bg-[#f0f0f0]">
                <svg viewBox="0 0 8 6" className="h-1.5 w-2" fill="none" stroke="#555" strokeWidth="1.600"><path d="M1 5l3-3 3 3" /></svg>
                <svg viewBox="0 0 8 6" className="h-1.5 w-2" fill="none" stroke="#555" strokeWidth="1.600"><path d="M1 1l3 3 3-3" /></svg>
              </div>
            </div>
            <div className="flex h-[18px] items-center">
              <label htmlFor="command" className="font-bold">Command:</label>
              <i className="ml-[3px] h-3.5 w-px bg-black" />
              <input id="command" value={command} onChange={(e) => setCommand(e.target.value)} className="h-4 flex-1 outline-none" />
              <div className="flex w-[15px] flex-col">
                <button type="button" aria-label="Up" className="flex h-2 items-center justify-center border border-[#aaa] bg-[#eee]"><i className="h-[3px] w-[5px] bg-black [clip-path:polygon(50%_0,100%_100%,0_100%)]" /></button>
                <button type="button" aria-label="Down" className="flex h-2 items-center justify-center border border-[#aaa] bg-[#eee]"><i className="h-[3px] w-[5px] bg-black [clip-path:polygon(0_0,100%_0,50%_100%)]" /></button>
              </div>
            </div>
          </div>
          <i className="w-px" />
        </section>

        <section aria-label="Toolbars" className="mt-[3px] border-t border-[#dcdee5]">
          <div className="flex h-14 border-b border-[#d6d9e1] pt-1">
            <Grip />
            <div className="ml-px flex-1">
              <div className="mb-px flex h-[17px] border-b border-[#c9cbd2]">
                {toolTabs.map(([name, w]) => (
                  <button
                    key={name}
                    type="button"
                    className={`${w} h-[17px] shrink-0 pl-2.5 text-left leading-[17px] whitespace-nowrap [clip-path:polygon(0_100%,0_70%,6px_0,calc(100%-5px)_0,100%_50%,100%_100%)] ${name === 'Surface Tools' ? 'bg-[#f0f1f4]' : 'bg-[#d9d9da]'}`}
                  >
                    {name}
                  </button>
                ))}
                <button type="button" aria-label="Toolbar options" className="mr-0.5 ml-auto"><Icon name="gearOutline" size="size-3.5" /></button>
              </div>
              <Toolbar tools={surfaceTools} />
            </div>
          </div>
          <div className="flex h-[50px] pt-1 pb-1.5">
            <Grip />
            <div className="ml-px"><Toolbar tools={vrayTools} /></div>
          </div>
        </section>

        <div className="flex flex-1">
          <div className="w-16 shrink-0">
            <div className="mt-[3px] mb-px ml-1 h-[3px] w-[54px] border-y border-[#c9ccd5]" />
            <div className="ml-px grid w-14 grid-cols-2">
              {palette.map((t) => <ToolButton key={t} name={t} />)}
            </div>
          </div>

          <div className="flex min-w-0 flex-1 flex-col border-l border-[#b9bcc6]">
            <main className="relative flex-1 bg-[#9da3ab]">
              <div className="flex h-5 w-[162px] items-center bg-[#8fa8c5] pl-[9px] font-bold">
                <span className="flex-1 whitespace-nowrap">Section Perspective_50</span>
                <i className="mr-[2px] h-3.5 w-px bg-black" />
                <i className="mr-1 h-1 w-[7px] bg-black [clip-path:polygon(0_0,100%_0,50%_100%)]" />
              </div>
              <Model />
              <Menu label="Viewport" items={viewMenu} active="Set Camera" checked="Ghosted" className="top-5 left-0 w-60" />
              <Menu label="Set Camera" items={cameraMenu} active="Place Camera and Target" shortcuts={{ 'Show Camera': 'F6' }} className="top-16 left-[234px] w-64" />
            </main>
            <div className="flex h-[22px] border-t border-[#dfe1e7]">
              {[['Perspective', 'w-[75px]'], ['Section Perspective_50', 'w-[133px]'], ['Front', 'w-[43px]'], ['Right', 'w-11']].map(([name, w], i) => (
                <button key={name} type="button" className={`${w} h-[19px] shrink-0 pt-px pl-[9px] text-left whitespace-nowrap [clip-path:polygon(0_0,100%_0,100%_85%,97%_100%,8px_100%)] ${i === 1 ? 'bg-[#f2f3f6]' : 'bg-[#d6d6d8]'}`}>{name}</button>
              ))}
              <button type="button" aria-label="New viewport" className="flex h-[19px] w-[26px] items-center justify-center border border-t-0 border-[#d0d3da] bg-[#f2f3f6]">
                <svg viewBox="0 0 10 10" className="size-2.5" fill="#fff" stroke="#666"><path d="M3.500.500h3v3h3v3h-3v3h-3v-3h-3v-3h3z" /></svg>
              </button>
            </div>
          </div>
          <div className="w-2 shrink-0" />
          <NamedViews />
        </div>

        <section aria-label="Object snaps" className="flex h-[31px] border-t border-[#d3d6de] pt-[3px] pb-[5px]">
          <Grip />
          <div className="ml-[3px] flex items-center">
            {snaps.map(([name, on, w]) => <Check key={name} label={name} on={on} className={w} />)}
            <Check label="Project" grey className="w-[68px]" />
            <Check label="Disable" grey />
          </div>
        </section>
        <footer className="flex h-[19px] border-t border-[#c3c6cc]">
          <p className="flex-1 leading-5">Adjust the view by placing the camera and camera target</p>
          <i className="w-7 border-l border-[#c3c6cc]" />
        </footer>
      </div>
      <div className="w-1 shrink-0 border-x-2 border-l-[#dfe0e4] border-r-[#30343c] bg-[#30343c]" />
    </div>
  );
}

export default App;
